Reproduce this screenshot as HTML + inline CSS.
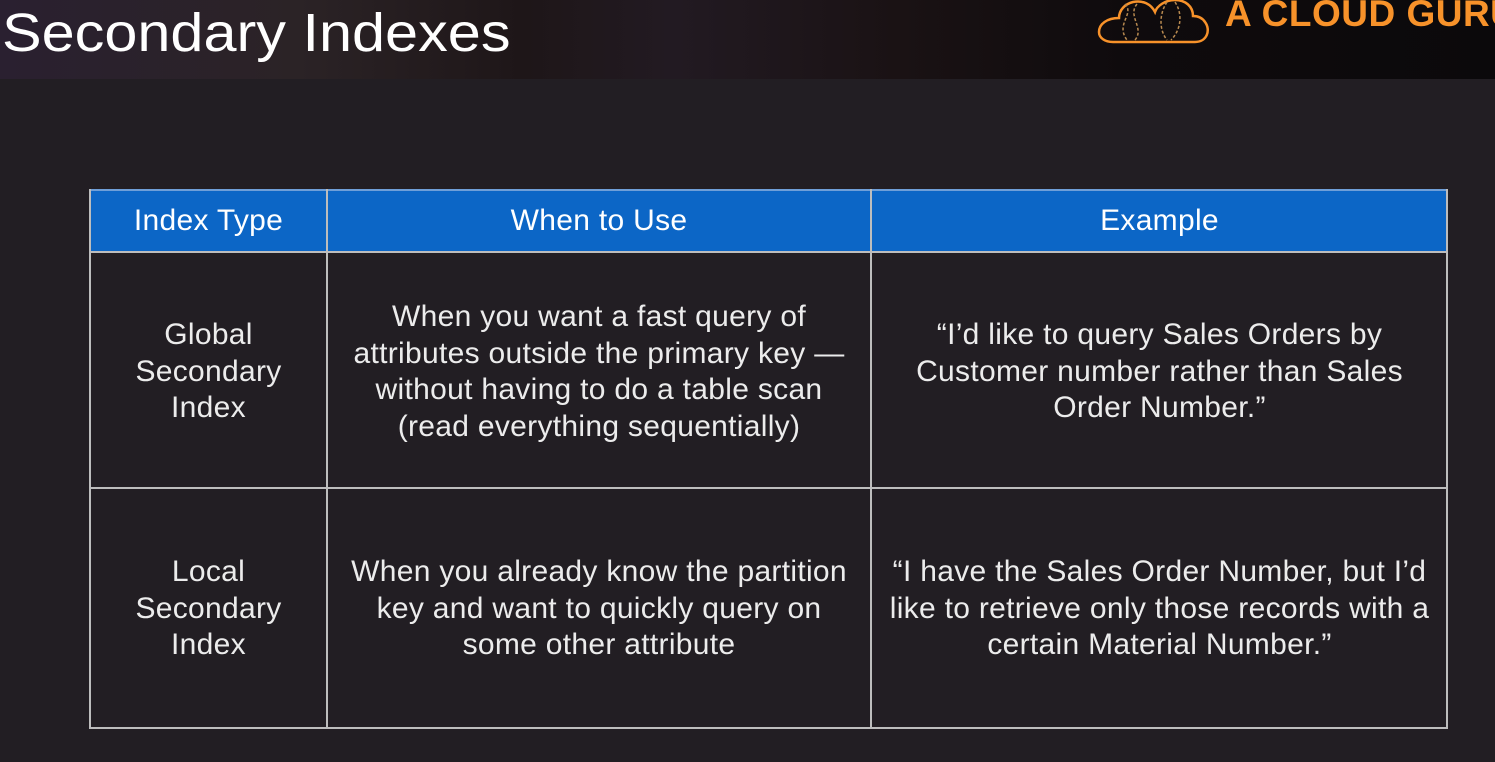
<!DOCTYPE html>
<html><head><meta charset="utf-8"><style>
html,body{margin:0;padding:0}
body{width:1495px;height:762px;background:#221e23;position:relative;overflow:hidden;font-family:"Liberation Sans",sans-serif;color:#ececec}
.hdr{position:absolute;left:0;top:0;width:1495px;height:79px;background:linear-gradient(90deg,#2a2030 0%,#2b2326 20%,#1e1618 35%,#221a22 45%,#1a1214 60%,#0f0b0d 75%,#0b090b 100%)}
.title{position:absolute;left:2px;top:2px;font-size:54px;color:#fff;transform:scaleX(1.1);transform-origin:left top;white-space:nowrap}
.logo{position:absolute;left:1225px;top:-7px;font-size:37px;font-weight:bold;color:#f7922a;letter-spacing:0.5px;white-space:nowrap}
.c{position:absolute;display:flex;align-items:center;justify-content:center;text-align:center;font-size:30px;letter-spacing:0.3px;line-height:36.5px;box-sizing:border-box;white-space:nowrap}
.h{background:#0c66c6;color:#fff}
.l{position:absolute;background:#bdbdbd}
</style></head><body>
<div class="hdr"></div>
<div class="title">Secondary Indexes</div>
<svg style="position:absolute;left:1095px;top:0" width="116" height="46" viewBox="0 0 116 46">
<path d="M18 42 H100 C112 42 116 30 110 22 C106 16 100 16 98 16 C98 6 90 0 80 0 C70 0 62 6 60 12 C56 4 48 0 38 2 C30 4 24 10 24 18 C12 18 4 24 4 32 C4 38 10 42 18 42 Z" fill="none" stroke="#f7922a" stroke-width="2.5"/>
<path d="M30 4 C40 14 20 24 32 40 M42 4 C32 16 50 28 40 40 M72 2 C64 14 64 30 72 40 M80 2 C88 14 86 30 76 40" fill="none" stroke="#b88a50" stroke-width="1.5" stroke-dasharray="3 2"/>
</svg>
<div class="logo">A CLOUD GURU</div>

<div class="c h" style="left:90px;top:190px;width:237px;height:62px">Index Type</div>
<div class="c h" style="left:327px;top:190px;width:544px;height:62px">When to Use</div>
<div class="c h" style="left:871px;top:190px;width:577px;height:62px">Example</div>

<div class="c" style="left:90px;top:252px;width:237px;height:236px;padding-top:4px">Global<br>Secondary<br>Index</div>
<div class="c" style="left:327px;top:252px;width:544px;height:236px;padding-top:4px">When you want a fast query of<br>attributes outside the primary key —<br>without having to do a table scan<br>(read everything sequentially)</div>
<div class="c" style="left:871px;top:252px;width:577px;height:236px;padding-top:4px">“I’d like to query Sales Orders by<br>Customer number rather than Sales<br>Order Number.”</div>

<div class="c" style="left:90px;top:488px;width:237px;height:240px;padding-top:2px">Local<br>Secondary<br>Index</div>
<div class="c" style="left:327px;top:488px;width:544px;height:240px;padding-top:2px">When you already know the partition<br>key and want to quickly query on<br>some other attribute</div>
<div class="c" style="left:871px;top:488px;width:577px;height:240px;padding-top:2px">“I have the Sales Order Number, but I’d<br>like to retrieve only those records with a<br>certain Material Number.”</div>

<div class="l" style="left:89px;top:189px;width:1359px;height:2px;background:#6f9fd8"></div>
<div class="l" style="left:89px;top:251px;width:1359px;height:2px"></div>
<div class="l" style="left:89px;top:487px;width:1359px;height:2px"></div>
<div class="l" style="left:89px;top:727px;width:1359px;height:2px"></div>
<div class="l" style="left:89px;top:189px;width:2px;height:540px"></div>
<div class="l" style="left:326px;top:189px;width:2px;height:540px"></div>
<div class="l" style="left:870px;top:189px;width:2px;height:540px"></div>
<div class="l" style="left:1446px;top:189px;width:2px;height:540px"></div>
</body></html>
